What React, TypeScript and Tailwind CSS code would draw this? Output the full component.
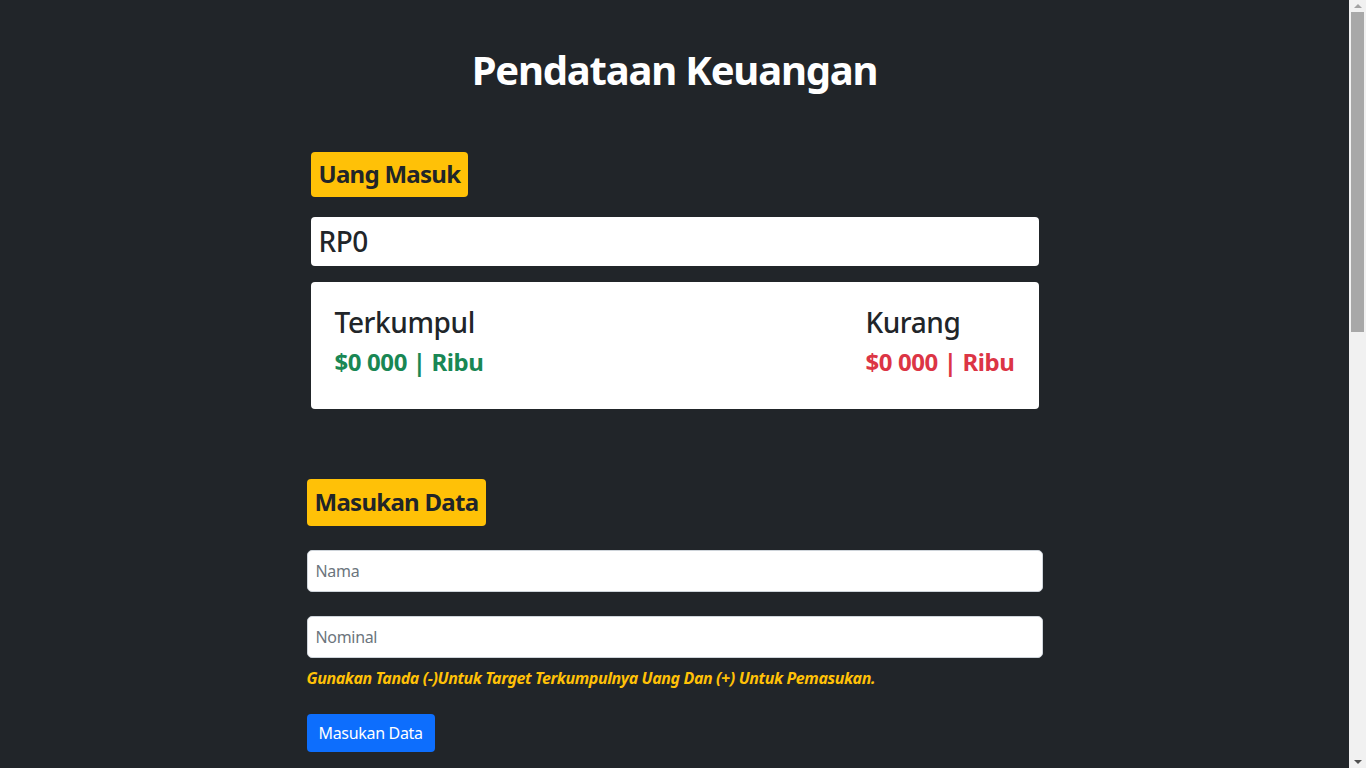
import React from "react";

const font = { fontFamily: "'Noto Sans', Lato, sans-serif" };

function Badge({ children, py = "py-2" }: { children: React.ReactNode; py?: string }) {
  return (
    <div className={`inline-block rounded-[4px] bg-[#ffc107] px-2 ${py} text-[24px] font-bold leading-[1.2] tracking-[-0.03em] text-[#212529]`}>
      {children}
    </div>
  );
}

function Amount({ label, value, tone }: { label: string; value: string; tone: string }) {
  return (
    <div className="tracking-[-0.025em]">
      <h3 className="mb-2 text-[28px] font-medium leading-[1.2] text-[#212529]">{label}</h3>
      <h4 className={`mb-2 text-[24px] font-bold leading-[1.2] ${tone}`}>{value}</h4>
    </div>
  );
}

export default function App() {
  return (
    <div className="min-h-[1760px] bg-[#212529] pr-[17px] pt-[46px]" style={font}>
      <h1 className="text-center text-[40px] font-bold leading-[1.2] tracking-[-0.03em] text-white">
        Pendataan Keuangan
      </h1>

      <div className="mx-auto w-[736px]">
        {/* ── Uang Masuk ── */}
        <section className="mt-[58px] px-1">
          <Badge>Uang Masuk</Badge>
          <div className="mt-5 rounded-[4px] bg-white px-2 py-2 text-[28px] font-medium leading-[1.2] tracking-[-0.02em] text-[#212529]">
            RP0
          </div>
          <div className="mt-4 flex justify-between rounded-[4px] bg-white px-6 pb-6 pt-6">
            <Amount label="Terkumpul" value="$0 000 | Ribu" tone="text-[#198754]" />
            <Amount label="Kurang" value="$0 000 | Ribu" tone="text-[#dc3545]" />
          </div>
        </section>

        {/* ── Masukan Data ── */}
        <section className="mt-[70px]">
          <Badge py="py-[9px]">Masukan Data</Badge>
          <div className="mt-6 flex flex-col gap-6">
            <input
              placeholder="Nama"
              className="h-[42px] w-full rounded-[5px] border border-[#ced4da] bg-white px-2 text-[16px] tracking-[-0.02em] text-[#212529] outline-none placeholder:text-[#6c757d]"
            />
            <input
              placeholder="Nominal"
              className="h-[42px] w-full rounded-[5px] border border-[#ced4da] bg-white px-2 text-[16px] tracking-[-0.02em] text-[#212529] outline-none placeholder:text-[#6c757d]"
            />
          </div>
          <p className="mt-2 text-[16px] font-bold italic leading-[1.5] tracking-[-0.025em] text-[#ffc107]">
            Gunakan Tanda (-)Untuk Target Terkumpulnya Uang Dan (+) Untuk Pemasukan.
          </p>
          <button className="mt-6 h-[38px] rounded-[4px] bg-[#0d6efd] px-3 text-[16px] leading-[1.5] tracking-[-0.02em] text-white">
            Masukan Data
          </button>
        </section>
      </div>

      {/* browser scrollbar, as seen in the screenshot */}
      <div className="fixed right-0 top-0 flex h-screen w-[17px] flex-col items-center bg-[#f1f1f1]">
        <div className="flex h-[12px] w-full items-center justify-center">
          <div className="h-0 w-0 border-x-[4px] border-b-[4px] border-x-transparent border-b-[#a3a3a3]" />
        </div>
        <div className="h-[320px] w-[13px] bg-[#a8a8a8]" />
        <div className="flex-1" />
        <div className="flex h-[12px] w-full items-center justify-center">
          <div className="h-0 w-0 border-x-[4px] border-t-[4px] border-x-transparent border-t-[#505050]" />
        </div>
      </div>
    </div>
  );
}
